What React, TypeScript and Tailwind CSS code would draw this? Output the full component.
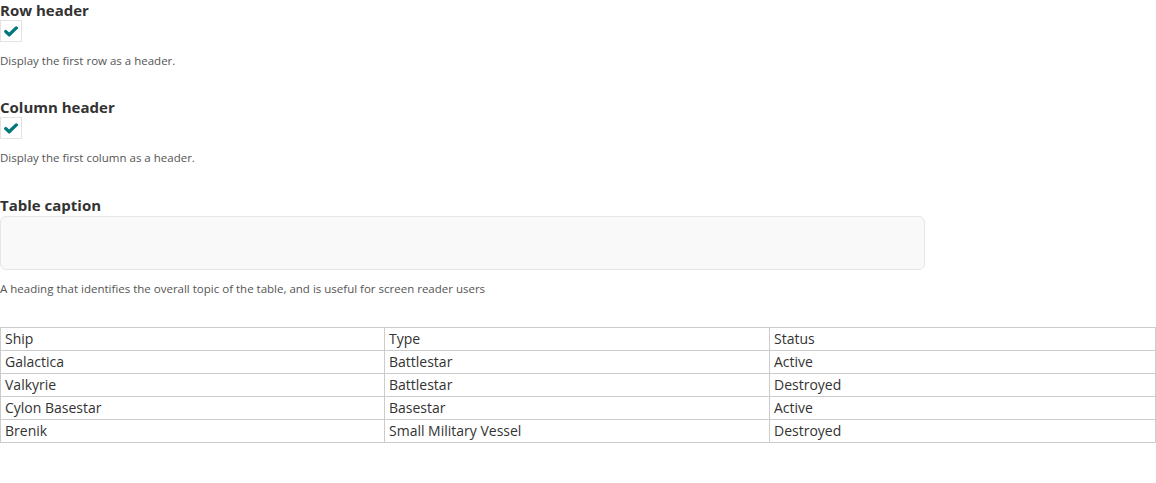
const ROWS = [
  ['Ship', 'Type', 'Status'],
  ['Galactica', 'Battlestar', 'Active'],
  ['Valkyrie', 'Battlestar', 'Destroyed'],
  ['Cylon Basestar', 'Basestar', 'Active'],
  ['Brenik', 'Small Military Vessel', 'Destroyed'],
];

function Check() {
  return (
    <div className="w-[22px] h-[22px] border border-[#e3e3e3] bg-white flex items-center justify-center">
      <svg width="14" height="11" viewBox="0 0 14 11">
        <path d="M1.8 5.6 L5.2 8.8 L12.3 1.9" fill="none" stroke="#00777a" strokeWidth="3.3" strokeLinecap="round" strokeLinejoin="round" />
      </svg>
    </div>
  );
}

function CheckField({ label, help }: { label: string; help: string }) {
  return (
    <div className="mb-[29px]">
      <h3 className="text-[15px] font-bold leading-[19px] text-[#333]">{label}</h3>
      <Check />
      <p className="mt-[11px] text-[11.5px] leading-[16px] text-[#555]">{help}</p>
    </div>
  );
}

export default function App() {
  return (
    <div className="bg-white pt-px text-[#333]" style={{ fontFamily: '"Open Sans", sans-serif' }}>
      <CheckField label="Row header" help="Display the first row as a header." />
      <CheckField label="Column header" help="Display the first column as a header." />

      {/* Caption */}
      <div>
        <h3 className="text-[15px] font-bold leading-[21px] text-[#333]">Table caption</h3>
        <div className="w-[925px] h-[54px] rounded-[6px] border border-[#e6e6e6] bg-[#f9f9f9]" />
        <p className="mt-[11px] text-[11.5px] leading-[16px] text-[#555]">
          A heading that identifies the overall topic of the table, and is useful for screen reader users
        </p>
      </div>

      <table className="mt-[30px] w-full table-fixed border-collapse text-[14px] leading-[22px] text-[#333]">
        <colgroup>
          <col className="w-[384px]" />
          <col className="w-[385px]" />
          <col />
        </colgroup>
        <tbody>
          {ROWS.map((r, i) => (
            <tr key={i}>
              {r.map((c, j) => (
                <td key={j} className="border border-[#ccc] px-[4px] py-0 font-normal">
                  {c}
                </td>
              ))}
            </tr>
          ))}
        </tbody>
      </table>
    </div>
  );
}
